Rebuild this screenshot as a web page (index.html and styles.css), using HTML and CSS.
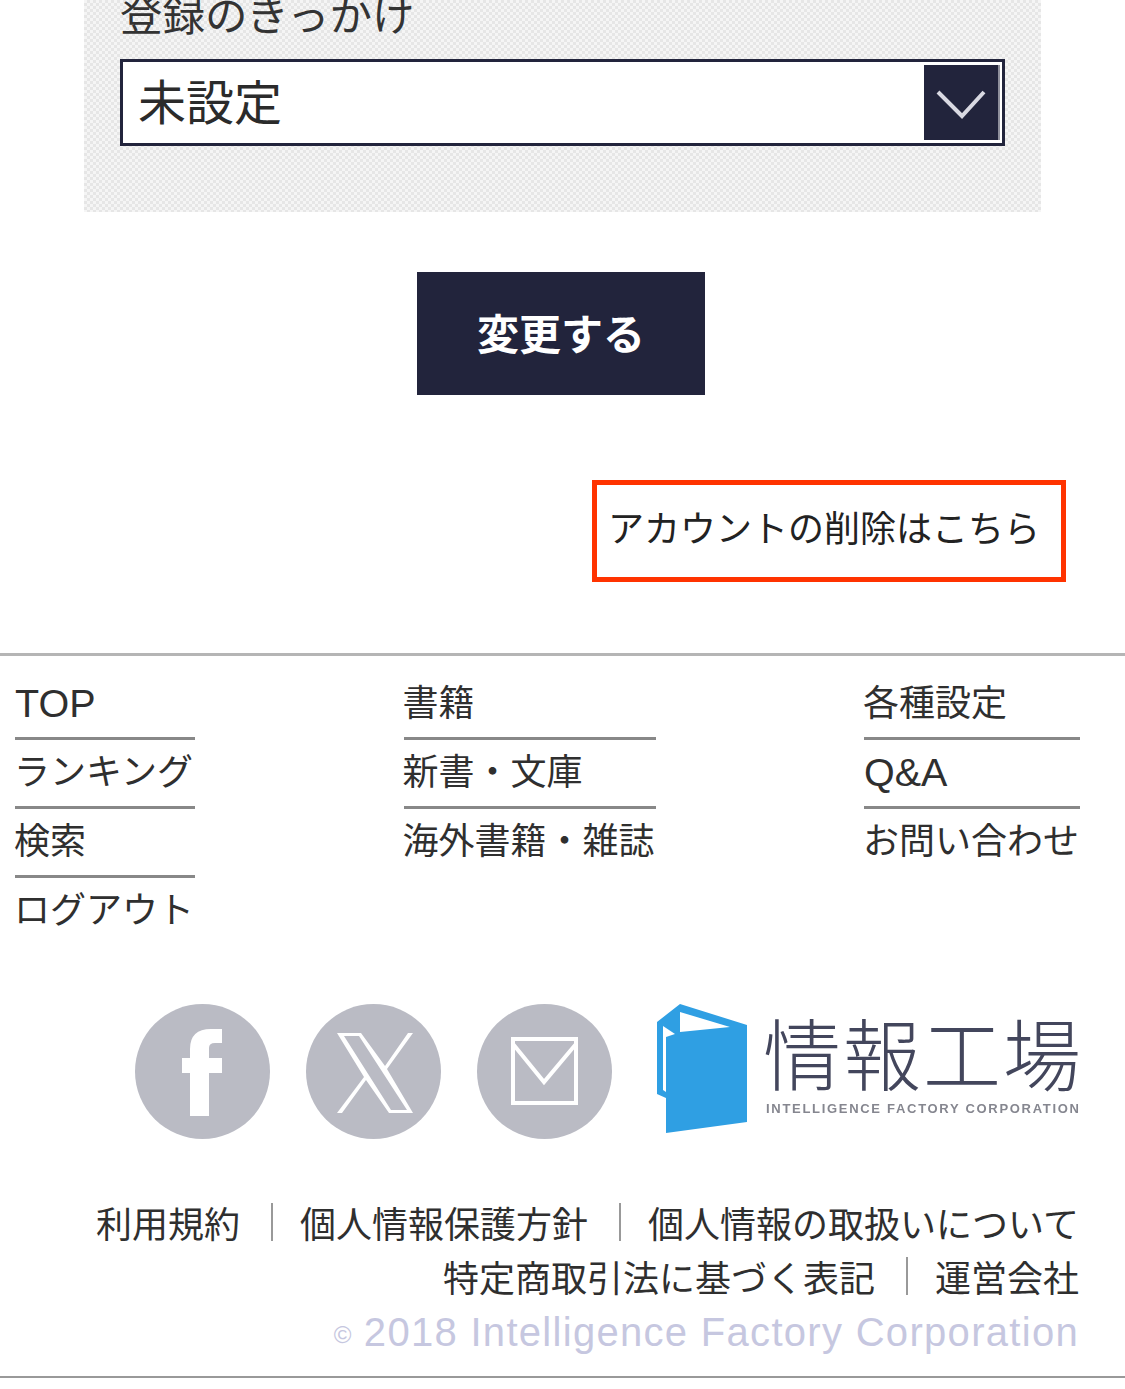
FILE: index.html
```html
<!DOCTYPE html>
<html lang="ja">
<head>
<meta charset="utf-8">
<title>情報工場</title>
<link rel="stylesheet" href="styles.css">
</head>
<body>
<main class="page">
  <section class="panel">
    <div class="label">登録のきっかけ</div>
    <div class="select">
      <span class="select-value">未設定</span>
      <span class="select-arrow">
        <svg class="chevron" viewBox="0 0 76 75"><path d="M14 27 L38 51 L60 27" fill="none" stroke="#d9d9e2" stroke-width="4"/></svg>
      </span>
    </div>
  </section>
  <div class="submit-row"><a class="submit">変更する</a></div>
  <div class="account-row"><a class="account">アカウントの削除はこちら</a></div>
  <footer class="footer">
    <nav class="nav">
      <ul class="nav-col nav-col-a">
        <li class="nav-item latin">TOP</li>
        <li class="nav-item">ランキング</li>
        <li class="nav-item">検索</li>
        <li class="nav-item">ログアウト</li>
      </ul>
      <ul class="nav-col nav-col-b">
        <li class="nav-item">書籍</li>
        <li class="nav-item">新書・文庫</li>
        <li class="nav-item">海外書籍・雑誌</li>
      </ul>
      <ul class="nav-col nav-col-c">
        <li class="nav-item">各種設定</li>
        <li class="nav-item latin">Q&amp;A</li>
        <li class="nav-item">お問い合わせ</li>
      </ul>
    </nav>
    <div class="brand-row">
      <svg class="social" viewBox="0 0 135 135"><circle cx="67.5" cy="67.5" r="67.5" fill="#babbc4"/><path fill="#fff" d="M74 112V69H87V54H74V44Q74 39 80 39H87V25H76Q55 25 55 45V54H47V69H55V112Z"/></svg>
      <svg class="social" viewBox="0 0 135 135"><circle cx="67.5" cy="67.5" r="67.5" fill="#babbc4"/><path fill="#fff" fill-rule="evenodd" d="M31 29H55L79 62L102 29H107L81 65L107 109H83L60 76L36 109H31L58 73ZM38 32L85 106H101L53 32Z"/></svg>
      <svg class="social" viewBox="0 0 135 135"><circle cx="67.5" cy="67.5" r="67.5" fill="#babbc4"/><path fill="none" stroke="#fff" stroke-width="4" d="M36 35H99V99H36ZM36 40L67 78L99 40"/></svg>
      <div class="logo">
        <svg class="logo-mark" viewBox="0 0 90 129"><path fill="#2f9fe3" d="M0 18L23 0L90 21V118L9 129V94L0 90Z"/><path fill="#fff" d="M23 8L73 23L23 28ZM6 22L18 30L9 33V88L6 86Z"/></svg>
        <div class="logo-text">
          <div class="logo-name">情報工場</div>
          <div class="logo-sub">INTELLIGENCE FACTORY CORPORATION</div>
        </div>
      </div>
    </div>
    <div class="legal-row">
      <a>利用規約</a><span class="sep"></span><a>個人情報保護方針</a><span class="sep"></span><a>個人情報の取扱いについて</a>
    </div>
    <div class="legal-row">
      <a>特定商取引法に基づく表記</a><span class="sep"></span><a>運営会社</a>
    </div>
    <div class="copyright"><span class="copy-mark">©</span> 2018 Intelligence Factory Corporation</div>
  </footer>
</main>
</body>
</html>
```
FILE: styles.css
```css
* { box-sizing: border-box; }
html, body { margin: 0; padding: 0; background: #fff; }
body {
  width: 1125px;
  height: 1389px;
  overflow: hidden;
  font-family: "Liberation Sans", "Noto Sans CJK JP", sans-serif;
  color: #2b2b2b;
}
.page { display: flex; flex-direction: column; }

.panel {
  width: 957px;
  height: 212px;
  margin-left: 84px;
  padding: 0 36px;
  overflow: hidden;
  background-color: #efefef;
  background-image: repeating-conic-gradient(#e6e6e6 0 25%, #f5f5f5 0 50%);
  background-size: 6px 6px;
}
.label {
  margin-top: -4px;
  font-size: 42.5px;
  line-height: 42px;
  color: #333;
  white-space: nowrap;
}
.select {
  display: flex;
  align-items: stretch;
  justify-content: space-between;
  width: 885px;
  height: 87px;
  margin-top: 21px;
  padding: 3px 2px 3px 15px;
  border: 3px solid #22243c;
  background: #fff;
}
.select-value { font-size: 48px; line-height: 77px; color: #2b2b2b; }
.select-arrow {
  display: block;
  width: 76px;
  height: 75px;
  background: #22243c;
  border-right: 2px solid #8f909c;
}
.chevron { display: block; width: 76px; height: 75px; filter: blur(0.4px); }

.submit-row { display: flex; justify-content: flex-start; padding-left: 417px; margin-top: 60px; }
.submit {
  width: 288px;
  height: 123px;
  background: #22243c;
  color: #fff;
  font-size: 42px;
  font-weight: 700;
  line-height: 127px;
  text-align: center;
}

.account-row { display: flex; justify-content: flex-end; padding-right: 59px; margin-top: 85px; }
.account {
  width: 474px;
  height: 102px;
  padding-left: 11px;
  border: 5px solid #ff3300;
  font-size: 36px;
  line-height: 90px;
  color: #222;
  white-space: nowrap;
}

.footer { margin-top: 71px; border-top: 3px solid #b5b5b5; height: 725px; border-bottom: 2px solid #999; }
.nav { display: flex; justify-content: space-between; padding: 15px 45px 0 15px; height: 289px; }
.nav-col { list-style: none; margin: 0; padding: 0; flex: none; }
.nav-col-a { width: 180px; }
.nav-col-b { width: 252px; }
.nav-col-c { width: 216px; }
.nav-item {
  height: 69px;
  font-size: 36px;
  line-height: 66px;
  text-indent: -1px;
  color: #2f2f2f;
  border-bottom: 3px solid #888;
  white-space: nowrap;
}
.nav-item:last-child { border-bottom: 0; }
.latin { font-size: 39.5px; line-height: 64px; text-indent: 0; }

.brand-row {
  display: flex;
  justify-content: flex-end;
  align-items: flex-start;
  gap: 36px;
  margin-top: 59px;
  padding-right: 45px;
}
.social { display: block; width: 135px; height: 135px; filter: blur(0.6px); }
.logo { display: flex; gap: 19px; margin-left: 9px; width: 423px; height: 129px; filter: blur(0.6px); }
.logo-mark { display: block; width: 90px; height: 129px; flex: none; }
.logo-text { width: 314px; }
.logo-name {
  margin: 12px 0 0 -3px;
  font-size: 78px;
  line-height: 84px;
  letter-spacing: 2px;
  font-weight: 300;
  color: #43465c;
  white-space: nowrap;
}
.logo-sub {
  font-size: 13px;
  line-height: 18px;
  letter-spacing: 1.7px;
  font-weight: 700;
  color: #85868f;
  white-space: nowrap;
}

.legal-row {
  display: flex;
  justify-content: flex-end;
  align-items: center;
  height: 54px;
  padding-right: 46px;
  font-size: 36px;
  color: #2f2f2f;
  white-space: nowrap;
}
.brand-row + .legal-row { margin-top: 56px; }
.sep { width: 2px; height: 38px; margin: 0 27px 0 31px; background: #999; }
.copyright {
  margin-top: 2px;
  height: 55px;
  padding-right: 46px;
  font-size: 40px;
  line-height: 55px;
  letter-spacing: 1.3px;
  text-align: right;
  color: #c6c7e0;
  white-space: nowrap;
}
.copy-mark { font-size: 24px; vertical-align: 3px; letter-spacing: 0; }
```
